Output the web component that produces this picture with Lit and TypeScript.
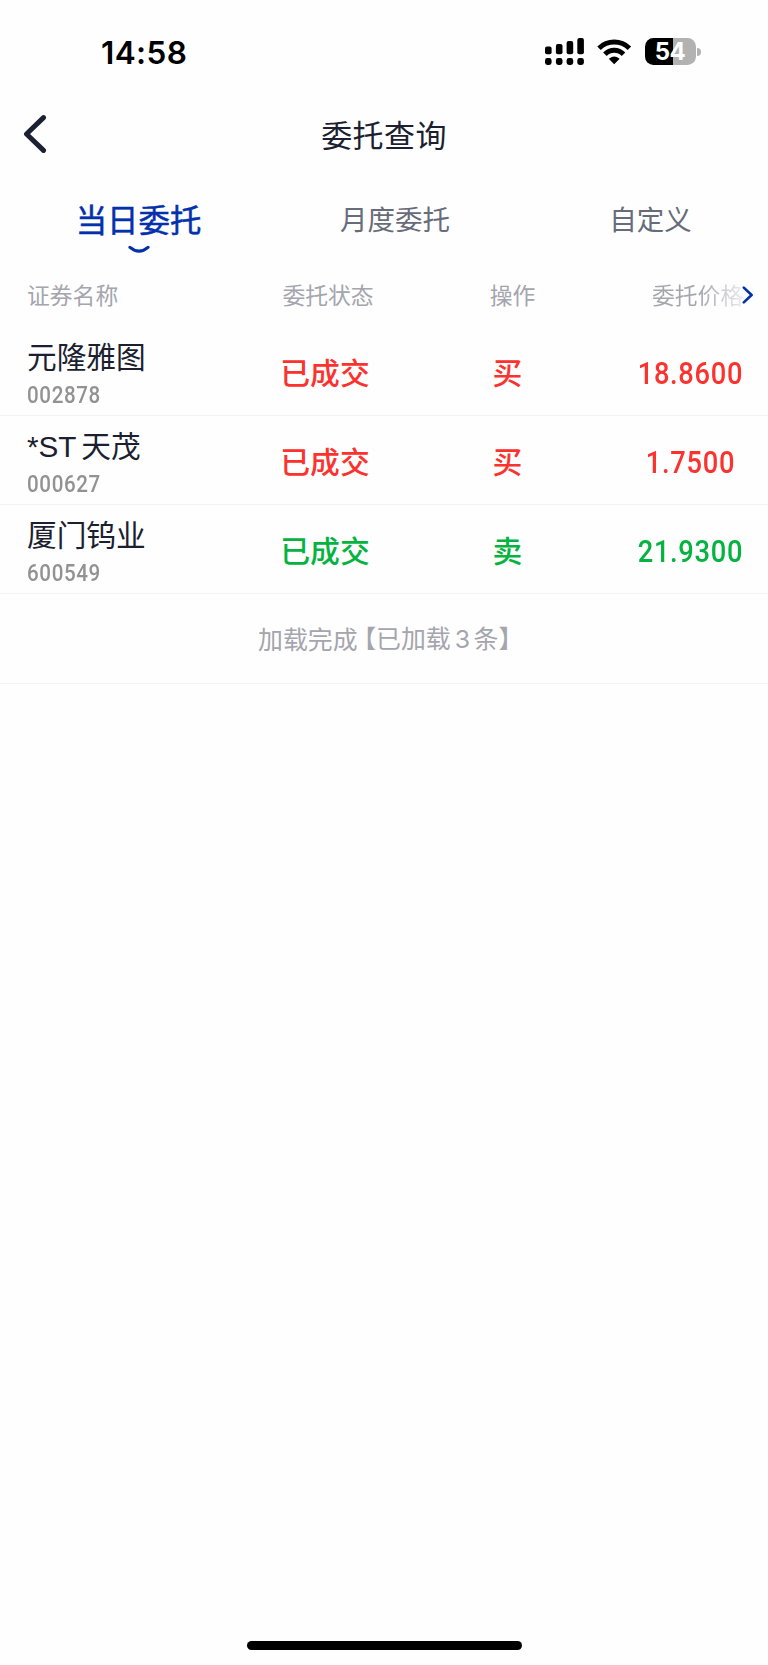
import { LitElement, html, css } from "lit";
import { customElement, property } from "lit/decorators.js";
import { classMap } from "lit/directives/class-map.js";

interface Order {
  name: string;
  code: string;
  status: string;
  side: "买" | "卖";
  price: string;
}

const ORDERS: Order[] = [
  { name: "元隆雅图", code: "002878", status: "已成交", side: "买", price: "18.8600" },
  { name: "*ST 天茂", code: "000627", status: "已成交", side: "买", price: "1.7500" },
  { name: "厦门钨业", code: "600549", status: "已成交", side: "卖", price: "21.9300" },
];

@customElement("status-bar")
class StatusBar extends LitElement {
  static styles = css`
    :host {
      display: flex;
      justify-content: space-between;
      align-items: center;
      box-sizing: border-box;
      height: 103px;
      padding: 0 67px 0 101px;
      font-family: Inter, "Liberation Sans", sans-serif;
      color: #000;
    }
    .time {
      font-size: 31.5px;
      line-height: 40px;
      font-weight: 600;
      letter-spacing: 0.4px;
      padding-top: 2px;
    }
    .icons {
      display: flex;
      align-items: center;
    }
    .signal { width: 39px; height: 27px; }
    .wifi { width: 36px; height: 27px; margin-left: 12px; }
    .battery {
      display: flex;
      align-items: center;
      margin-left: 13px;
    }
    .cell {
      width: 51px;
      height: 27px;
      border-radius: 8.5px;
      background: linear-gradient(90deg, #000 54%, #b2b2b2 54%);
      color: #fff;
      font-size: 24px;
      line-height: 28px;
      font-weight: 650;
      text-align: center;
      letter-spacing: -0.6px;
    }
    .nub {
      width: 4px;
      height: 8px;
      margin-left: 1.5px;
      border-radius: 0 4px 4px 0;
      background: #b2b2b2;
    }
  `;
  render() {
    return html`
      <span class="time">14:58</span>
      <div class="icons">
        <svg class="signal" viewBox="0 0 39 27">
          <rect x="0" y="8.6" width="6.6" height="7.6" rx="2" />
          <rect x="10.9" y="6" width="6.6" height="10.2" rx="2" />
          <rect x="21.6" y="3" width="6.6" height="13.2" rx="2" />
          <rect x="32.3" y="0" width="6.6" height="16.2" rx="2" />
          <rect x="0" y="20" width="6.6" height="7" rx="2.4" />
          <rect x="10.9" y="20" width="6.6" height="7" rx="2.4" />
          <rect x="21.6" y="20" width="6.6" height="7" rx="2.4" />
          <rect x="32.3" y="20" width="6.6" height="7" rx="2.4" />
        </svg>
        <svg class="wifi" viewBox="0 0 36 27">
          <g fill="none" stroke="#000" stroke-width="5">
            <path d="M3 10.2A21.8 21.8 0 0 1 33.4 10.2" />
            <path d="M8.9 16.2A13 13 0 0 1 27.5 16.2" />
          </g>
          <path d="M18.2 26.3L13 21.1Q12.8 20.7 13.2 20.4A8.2 8.2 0 0 1 23.2 20.4Q23.6 20.7 23.4 21.1Z" />
        </svg>
        <div class="battery">
          <div class="cell">54</div>
          <div class="nub"></div>
        </div>
      </div>
    `;
  }
}

@customElement("order-row")
class OrderRow extends LitElement {
  @property({ attribute: false }) order!: Order;

  static styles = css`
    :host {
      display: grid;
      grid-template-columns: 247px 156px 209px 156px;
      align-items: center;
      box-sizing: border-box;
      height: 89.1px;
      border-bottom: 1.4px solid #f3f3f4;
    }
    .security {
      padding: 8px 0 0 27px;
    }
    .name {
      color: #1b1f30;
      font-family: "Liberation Sans", "Noto Sans CJK SC", sans-serif;
      font-size: 29.7px;
      line-height: 40px;
      word-spacing: -3px;
      white-space: nowrap;
    }
    .code {
      width: max-content;
      color: #929292;
      font: 500 23.4px/35px Roboto, sans-serif;
      letter-spacing: 0.7px;
      transform: scaleX(0.88);
      transform-origin: left;
    }
    .status, .side, .price {
      text-align: center;
      font-weight: 500;
      color: #fb322d;
      font-size: 29.8px;
      line-height: 39px;
    }
    .price {
      font-family: Roboto, sans-serif;
      font-size: 31px;
      letter-spacing: 0.8px;
      padding: 4px 0 0 1px;
      transform: scaleX(0.88);
    }
    .sell { color: #04b340; }
  `;
  render() {
    const { name, code, status, side, price } = this.order;
    const sell = side === "卖";
    return html`
      <div class="security">
        <div class="name">${name}</div>
        <div class="code">${code}</div>
      </div>
      <div class=${classMap({ status: true, sell })}>${status}</div>
      <div class=${classMap({ side: true, sell })}>${side}</div>
      <div class=${classMap({ price: true, sell })}>${price}</div>
    `;
  }
}

@customElement("app-root")
class AppRoot extends LitElement {
  static styles = css`
    :host {
      display: flex;
      flex-direction: column;
      box-sizing: border-box;
      width: 768px;
      height: 1665px;
      overflow: hidden;
      background: #fefefe;
      font-family: "Noto Sans CJK SC", sans-serif;
    }
    .nav {
      display: grid;
      grid-template-columns: 1fr auto 1fr;
      align-items: center;
      height: 62px;
    }
    .back {
      display: block;
      width: 24px;
      height: 40px;
      margin-left: 23px;
    }
    .title {
      font-size: 31px;
      line-height: 44px;
      letter-spacing: 0.4px;
      color: #1b1f30;
    }
    .tabs {
      display: grid;
      grid-template-columns: 277px 236px 275px;
      height: 99px;
      padding-top: 32px;
      box-sizing: border-box;
    }
    .tab {
      display: flex;
      flex-direction: column;
      align-items: center;
      color: #686b79;
      font-size: 27.5px;
      line-height: 43px;
    }
    .current {
      color: #0331ac;
      font-size: 31.4px;
      -webkit-text-stroke: 0.5px #0331ac;
    }
    .smile { width: 24px; height: 10px; margin-top: 5px; }
    .columns {
      display: grid;
      grid-template-columns: 256px 144px 225px 143px;
      align-items: center;
      height: 63px;
      padding-bottom: 1px;
      box-sizing: border-box;
      color: #a4a5ad;
      font-size: 22.8px;
      line-height: 32px;
    }
    .first { padding-left: 27px; }
    .mid { text-align: center; }
    .last {
      display: flex;
      align-items: center;
      padding-left: 27px;
    }
    .fade {
      background: linear-gradient(90deg, #a4a5ad 50%, #ececef 100%);
      background-clip: text;
      -webkit-background-clip: text;
      color: transparent;
    }
    .more { width: 12px; height: 18px; margin-left: -1px; }
    .done {
      display: flex;
      align-items: center;
      justify-content: center;
      height: 89.3px;
      padding-left: 1px;
      box-sizing: border-box;
      border-bottom: 1.4px solid #f3f3f4;
      color: #a4a5ad;
      font-size: 24.9px;
      line-height: 36px;
      font-feature-settings: "halt";
      white-space: pre;
    }
    .loaded { margin-left: 6px; }
    .count {
      font-family: Inter, sans-serif;
      margin: 0 3.5px 0 4px;
    }
    .home {
      width: 275px;
      height: 9px;
      margin: auto auto 15px;
      border-radius: 5px;
      background: #000;
    }
  `;
  render() {
    return html`
      <status-bar></status-bar>
      <div class="nav">
        <svg class="back" viewBox="0 0 24 40" fill="none" stroke="#1b2033" stroke-width="5" stroke-linecap="round" stroke-linejoin="round">
          <path d="M20.5 3.6L3.5 20L20.5 36.4" />
        </svg>
        <div class="title">委托查询</div>
      </div>
      <div class="tabs">
        <div class="tab current">
          当日委托
          <svg class="smile" viewBox="0 0 24 10" fill="none" stroke="#0331ac" stroke-width="3.2" stroke-linecap="round">
            <path d="M3 2.4Q12 10 21 2.4" />
          </svg>
        </div>
        <div class="tab">月度委托</div>
        <div class="tab">自定义</div>
      </div>
      <div class="columns">
        <div class="first">证券名称</div>
        <div class="mid">委托状态</div>
        <div class="mid">操作</div>
        <div class="last">
          <span class="fade">委托价格</span>
          <svg class="more" viewBox="0 0 12 18" fill="none" stroke="#0331ac" stroke-width="2.6" stroke-linecap="round" stroke-linejoin="round">
            <path d="M1.8 1.6L9.6 9L1.8 16.4" />
          </svg>
        </div>
      </div>
      ${ORDERS.map((o) => html`<order-row .order=${o}></order-row>`)}
      <div class="done"><span>加载完成</span><span class="loaded">【已加载<span class="count">3</span>条】</span></div>
      <div class="home"></div>
    `;
  }
}
